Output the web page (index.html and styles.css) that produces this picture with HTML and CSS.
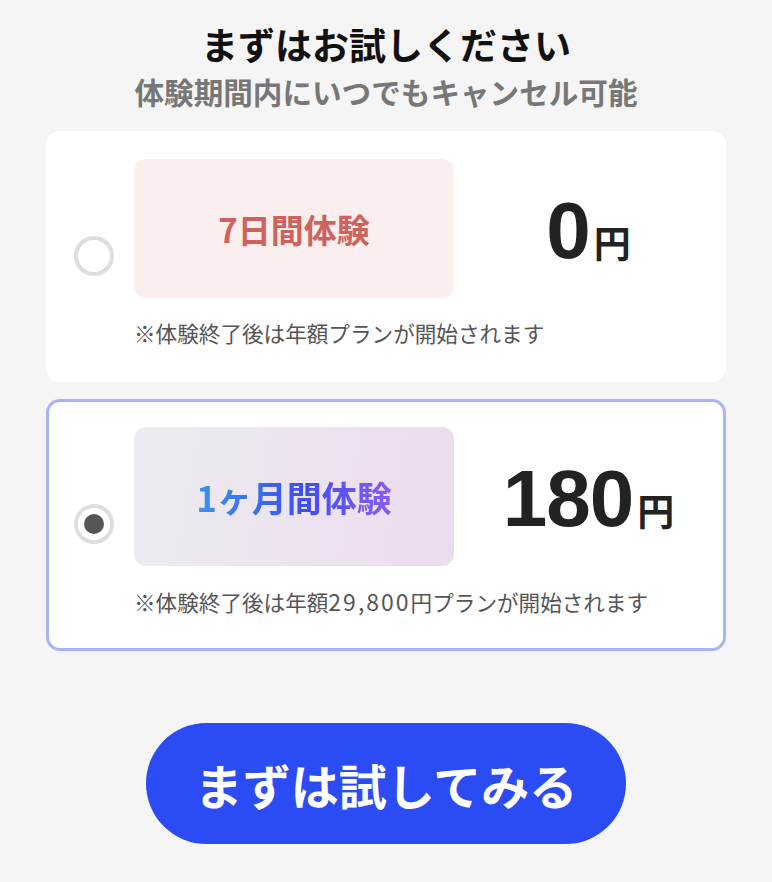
FILE: index.html
```html
<!DOCTYPE html>
<html lang="ja">
<head>
<meta charset="UTF-8">
<title>まずはお試しください</title>
<link rel="stylesheet" href="styles.css">
</head>
<body>
<div class="page">
    <div class="head">
        <h1>まずはお試しください</h1>
        <p>体験期間内にいつでもキャンセル可能</p>
    </div>

    <div class="plans">
        <label class="plan">
            <input type="radio" name="plan" value="7d">
            <span class="radio"></span>
            <div class="body">
                <div class="row">
                    <div class="tag tag-red">7日間体験</div>
                    <div class="price"><b>0</b><span>円</span></div>
                </div>
                <div class="note">※体験終了後は年額プランが開始されます</div>
            </div>
        </label>

        <label class="plan">
            <input type="radio" name="plan" value="1m" checked>
            <span class="radio"></span>
            <div class="body">
                <div class="row">
                    <div class="tag tag-blue"><span>1ヶ月間体験</span></div>
                    <div class="price"><b>180</b><span>円</span></div>
                </div>
                <div class="note">※体験終了後は年額<span class="num">29,800</span>円プランが開始されます</div>
            </div>
        </label>
    </div>

    <div class="actions">
        <button class="go">まずは試してみる</button>
    </div>
</div>
</body>
</html>
```

FILE: styles.css
```css
body {
    margin: 0;
    background: #f5f5f5;
    font-family: "Noto Sans CJK JP", "Noto Sans", sans-serif;
    color: #111;
}

.page {
    width: 680px;
    margin: 0 auto;
    padding-top: 18px;
}

.head {
    text-align: center;
}

.head h1 {
    margin: 0;
    font-size: 37px;
    line-height: 52px;
    font-weight: 700;
    color: #111;
}

.head p {
    margin: 0;
    font-size: 29.6px;
    line-height: 44px;
    font-weight: 700;
    color: #777;
}

.plans {
    margin-top: 17px;
    display: flex;
    flex-direction: column;
    gap: 17px;
}

.plan {
    display: flex;
    align-items: center;
    background: #fff;
    border: 3px solid transparent;
    border-radius: 14px;
    padding: 25px 0 31px 25px;
    cursor: pointer;
}

.plan input {
    display: none;
}

.radio {
    flex: none;
    box-sizing: border-box;
    width: 40px;
    height: 40px;
    border: 4px solid #dedede;
    border-radius: 50%;
    display: flex;
    align-items: center;
    justify-content: center;
    margin: 4px 20px 0 0;
}

.plan input:checked + .radio::after {
    content: "";
    width: 20px;
    height: 20px;
    border-radius: 50%;
    background: #555;
}

.plan:has(input:checked) {
    border-color: #a7b4f7;
}

.body {
    flex: 1;
}

.row {
    display: flex;
    align-items: center;
}

.tag {
    width: 320px;
    height: 139px;
    border-radius: 12px;
    display: flex;
    align-items: center;
    justify-content: center;
    font-size: 33px;
    font-weight: 700;
}

.tag-red {
    background: #fbeeee;
    color: #d0625e;
}

.tag-blue {
    background: linear-gradient(100deg, #ececf0, #ecdbee);
    font-size: 35px;
}

.tag-blue span {
    background: linear-gradient(90deg, #3b93f2 0%, #3b4ff0 55%, #8a5cf2 100%);
    -webkit-background-clip: text;
    background-clip: text;
    color: transparent;
}

.price {
    flex: 1;
    text-align: center;
    color: #222;
    line-height: 1;
    padding-top: 4px;
}

.price b {
    font-family: "Liberation Sans", Arial, sans-serif;
    font-size: 80px;
    font-weight: 700;
    letter-spacing: -1px;
}

.price span {
    font-size: 37px;
    font-weight: 700;
    margin-left: 4px;
}

.note {
    margin-top: 20px;
    font-size: 21.6px;
    line-height: 30px;
    color: #555;
}

.note .num {
    font-size: 23px;
    letter-spacing: 2px;
}

.actions {
    display: flex;
    justify-content: center;
    margin-top: 72px;
}

.go {
    width: 480px;
    height: 121px;
    border: none;
    border-radius: 61px;
    background: #2b4bf5;
    color: #fff;
    font-family: inherit;
    font-size: 48px;
    font-weight: 700;
    cursor: pointer;
}
```
